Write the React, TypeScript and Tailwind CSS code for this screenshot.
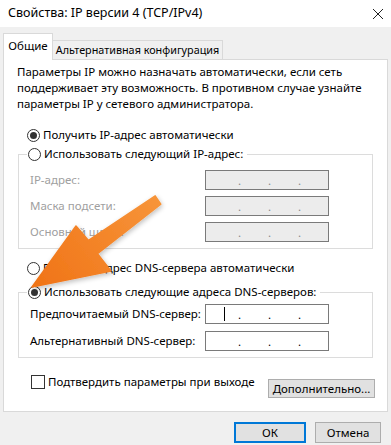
import React from "react";

function Radio({ checked }: { checked?: boolean }) {
  return (
    <span className="flex h-[13px] w-[13px] shrink-0 items-center justify-center rounded-full border border-[#333] bg-white">
      {checked && <span className="h-[7px] w-[7px] rounded-full bg-[#333]" />}
    </span>
  );
}

function IpBox({ disabled, cursor }: { disabled?: boolean; cursor?: boolean }) {
  return (
    <div
      className={
        "relative flex h-[20px] w-[124px] shrink-0 items-end border pb-[1px] " +
        (disabled ? "border-[#7a7a7a] bg-[#ececec] text-[#8a8a8a]" : "border-[#7a7a7a] bg-white text-black")
      }
    >
      <span className="flex w-[32px] justify-end pr-[13px]">
        {cursor && <span className="mb-[1px] h-[14px] w-[1px] bg-black" />}
      </span>
      <span className="w-[30px] leading-[14px]">.</span>
      <span className="w-[30px] leading-[14px]">.</span>
      <span className="w-[30px] leading-[14px]">.</span>
    </div>
  );
}

function Row({ label, disabled, cursor }: { label: string; disabled?: boolean; cursor?: boolean }) {
  return (
    <div className="flex items-center">
      <span className={"w-[186px] shrink-0 whitespace-nowrap pl-[11px] " + (disabled ? "text-[#a0a0a0]" : "text-black")}>
        {label}
      </span>
      <IpBox disabled={disabled} cursor={cursor} />
    </div>
  );
}

function Group({ children, title, checked, h }: { children: React.ReactNode; title: string; checked?: boolean; h: string }) {
  return (
    <div className={"mx-[14px] flex flex-col border border-t-0 border-[#dcdcdc] " + h}>
      <div className="-mx-[1px] flex h-0 items-center">
        <span className="w-[9px] border-t border-[#dcdcdc]" />
        <span className="flex items-center gap-[3px] whitespace-nowrap bg-white px-[1px] leading-[16px]">
          <Radio checked={checked} />
          <span>{title}</span>
        </span>
        <span className="ml-[3px] flex-1 border-t border-[#dcdcdc]" />
      </div>
      {children}
    </div>
  );
}

export default function App() {
  return (
    <div className="relative h-[445px] w-[391px] overflow-hidden bg-[#f0f0f0] text-[11.5px] text-black [font-family:'Noto_Sans',sans-serif]">
      <div className="flex h-[27px] items-center justify-between bg-white pl-[8px] pr-[6px]">
        <span className="text-[12.5px]">Свойства: IP версии 4 (TCP/IPv4)</span>
        <svg width="12" height="12" viewBox="0 0 12 12" className="mr-[1px]">
          <path d="M1 1L11 11M11 1L1 11" stroke="#222" strokeWidth="1" />
        </svg>
      </div>

      <div className="ml-[3px] mt-[6px] flex items-end">
        <div className="relative z-10 -mb-[1px] flex h-[27px] w-[50px] shrink-0 items-center justify-center border border-b-0 border-[#d9d9d9] bg-white pb-[2px]">
          Общие
        </div>
        <div className="flex h-[19px] w-[170px] shrink-0 items-center justify-center whitespace-nowrap border border-b-0 border-l-0 border-[#d9d9d9] bg-[#f0f0f0] text-[10.8px]">
          Альтернативная конфигурация
        </div>
      </div>

      <div className="mx-[3px] flex h-[353px] flex-col border border-[#d9d9d9] bg-white">
        <p className="whitespace-nowrap pl-[13px] pt-[4px] leading-[16px]">
          Параметры IP можно назначать автоматически, если сеть
          <br />
          поддерживает эту возможность. В противном случае узнайте
          <br />
          параметры IP у сетевого администратора.
        </p>

        <div className="mt-[15px] flex items-center gap-[3px] pl-[23px] leading-[16px]">
          <Radio checked />
          <span>Получить IP-адрес автоматически</span>
        </div>

        <div className="mt-[11px]">
          <Group title="Использовать следующий IP-адрес:" h="h-[95px]">
            <div className="mt-[16px] flex flex-col gap-[6px]">
              <Row label="IP-адрес:" disabled />
              <Row label="Маска подсети:" disabled />
              <Row label="Основной шлюз:" disabled />
            </div>
          </Group>
        </div>

        <div className="mt-[11px] flex items-center gap-[3px] pl-[23px] leading-[16px]">
          <Radio />
          <span>Получить адрес DNS-сервера автоматически</span>
        </div>

        <div className="mt-[16px]">
          <Group title="Использовать следующие адреса DNS-серверов:" checked h="h-[66px]">
            <div className="mt-[12px] flex flex-col gap-[7px]">
              <Row label="Предпочитаемый DNS-сервер:" cursor />
              <Row label="Альтернативный DNS-сервер:" />
            </div>
          </Group>
        </div>

        <div className="mt-[17px] flex items-start justify-between pl-[27px] pr-[12px]">
          <div className="flex items-center gap-[3px]">
            <span className="h-[14px] w-[14px] border border-[#333] bg-white" />
            <span className="whitespace-nowrap leading-[14px]">Подтвердить параметры при выходе</span>
          </div>
          <button className="mt-[4px] flex h-[19px] w-[107px] items-center justify-center whitespace-nowrap border border-[#adadad] bg-[#e1e1e1]">
            Дополнительно...
          </button>
        </div>
      </div>

      <div className="mt-[10px] flex justify-end gap-[9px] pr-[10px]">
        <button className="flex h-[21px] w-[72px] items-center justify-center border-2 border-[#0078d7] bg-[#e1e1e1]">
          ОК
        </button>
        <button className="flex h-[21px] w-[66px] items-center justify-center border border-[#adadad] bg-[#e1e1e1]">
          Отмена
        </button>
      </div>

      <svg className="pointer-events-none absolute left-0 top-0" width="391" height="445" viewBox="0 0 391 445">
        <defs>
          <linearGradient id="arr" x1="160" y1="195" x2="32" y2="287" gradientUnits="userSpaceOnUse">
            <stop offset="0" stopColor="#f7953a" />
            <stop offset="1" stopColor="#f07316" />
          </linearGradient>
          <filter id="soft" x="-20%" y="-20%" width="140%" height="140%">
            <feGaussianBlur in="SourceAlpha" stdDeviation="2.5" />
            <feOffset dx="1" dy="2" result="b" />
            <feComponentTransfer>
              <feFuncA type="linear" slope="0.25" />
            </feComponentTransfer>
            <feMerge>
              <feMergeNode />
              <feMergeNode in="SourceGraphic" />
            </feMerge>
          </filter>
        </defs>
        <polygon
          points="32,287 76,226 88.5,240.4 155.2,195.9 160.8,204.1 97.5,253.6 111,271"
          fill="url(#arr)"
          stroke="url(#arr)"
          strokeWidth="1.5"
          strokeLinejoin="round"
          filter="url(#soft)"
        />
      </svg>
    </div>
  );
}
